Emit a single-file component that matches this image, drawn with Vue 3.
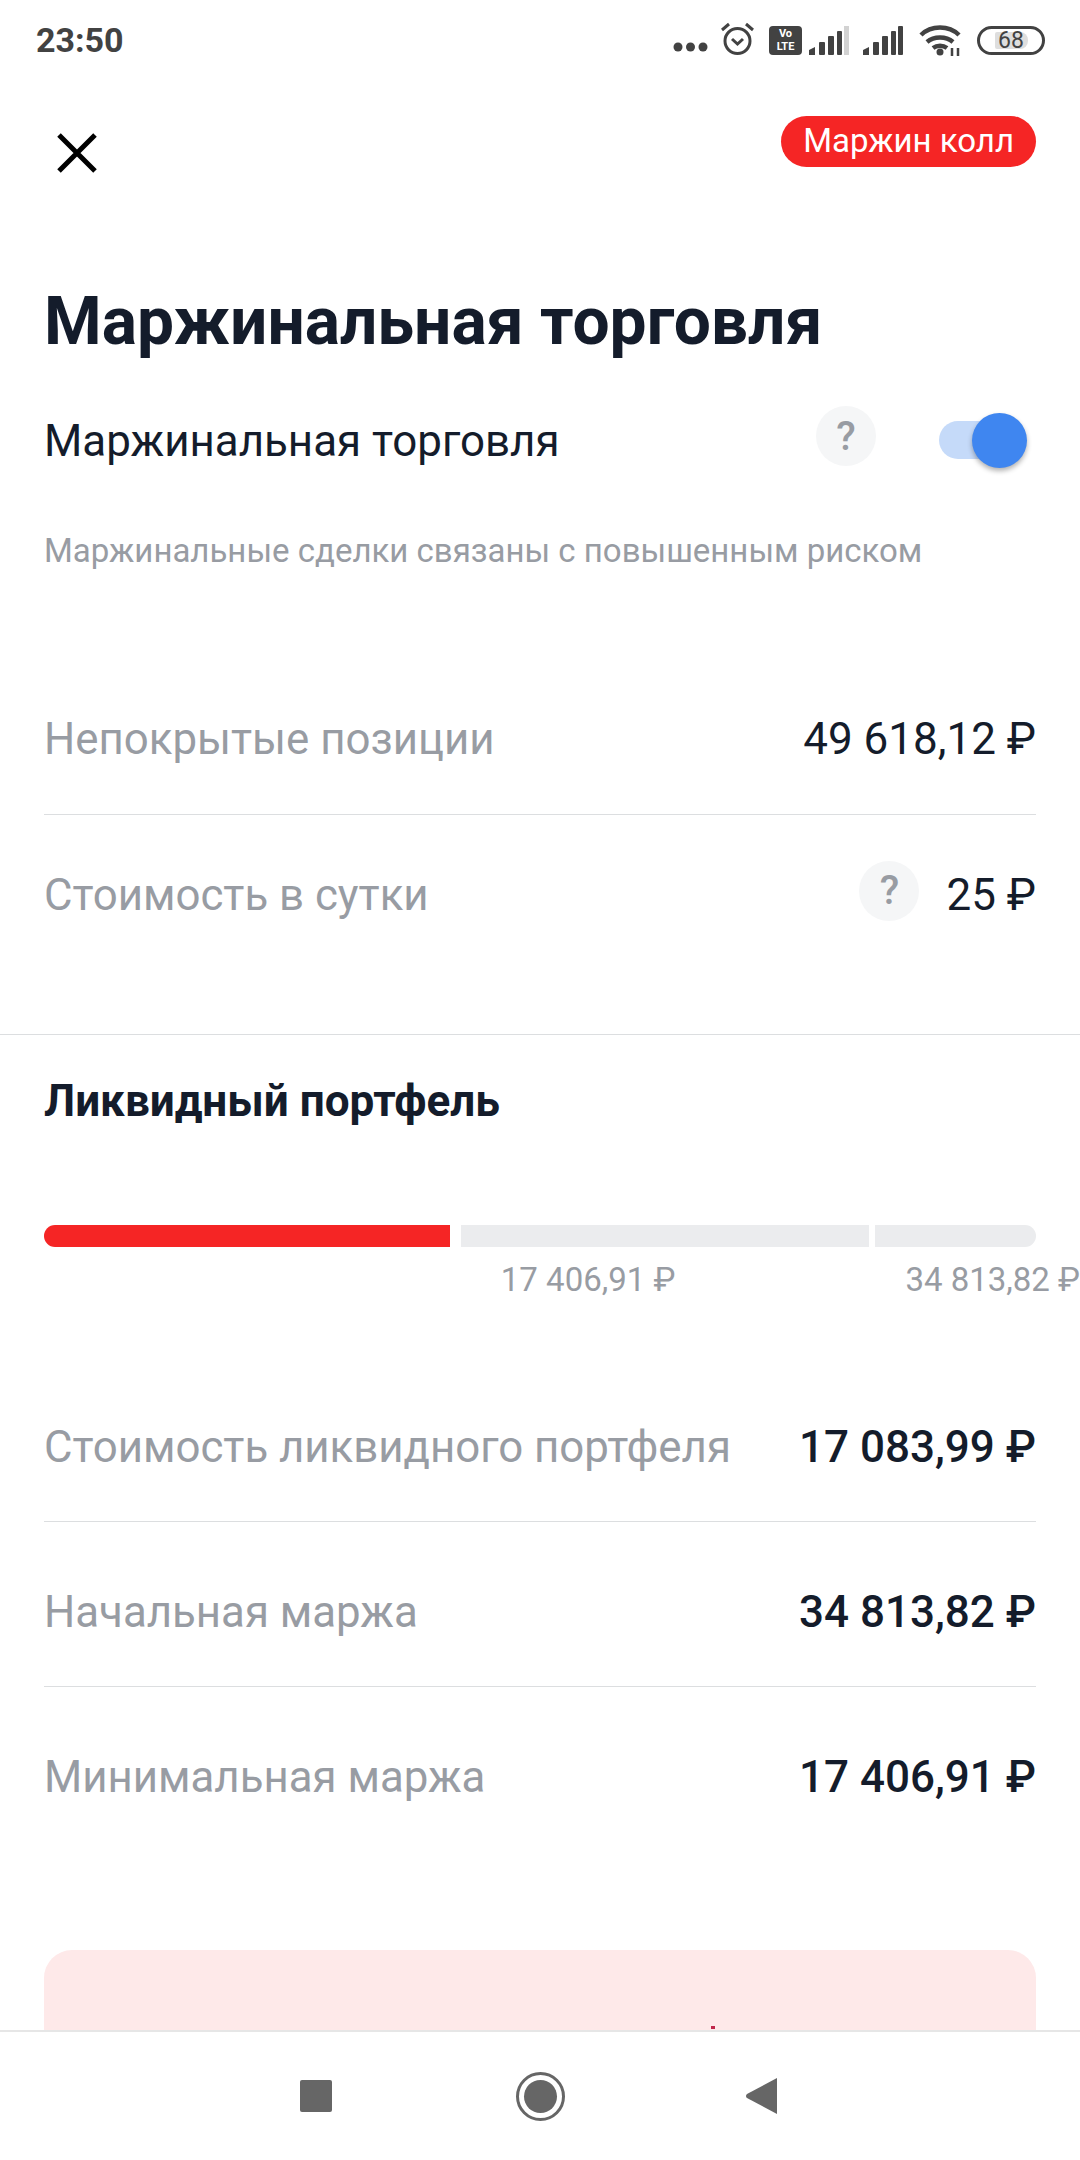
<template>
  <div class="screen">
    <div class="status-bar">
      <span class="time">23:50</span>
      <div class="status-icons">
        <svg class="dots" width="35" height="10" viewBox="0 0 35 10"><circle cx="5" cy="5" r="4.500" /><circle cx="17.500" cy="5" r="4.500" /><circle cx="30" cy="5" r="4.500" /></svg>
        <svg class="alarm" width="35" height="33" viewBox="0 0 35 33">
          <circle cx="17.500" cy="19" r="12.500" fill="none" stroke="#424242" stroke-width="3" />
          <path d="M12 17l5.500 5 5.500-5" fill="none" stroke="#424242" stroke-width="3" />
          <path d="M2 8l7-6M33 8l-7-6" fill="none" stroke="#424242" stroke-width="3" />
        </svg>
        <div class="volte"><span>Vo</span><span>LTE</span></div>
        <svg class="sig1" width="40" height="29" viewBox="0 0 40 29">
          <path d="M0 29v-5l6-3v8z" />
          <rect x="10" y="16" width="6" height="13" rx="1" />
          <rect x="19" y="10" width="6" height="19" rx="1" />
          <rect x="28" y="5" width="5" height="24" rx="1" />
          <rect x="35" y="0" width="5" height="29" fill="#d2d2d2" />
        </svg>
        <svg class="sig2" width="40" height="29" viewBox="0 0 40 29">
          <path d="M0 29v-5l6-3v8z" />
          <rect x="10" y="16" width="6" height="13" rx="1" />
          <rect x="19" y="10" width="6" height="19" rx="1" />
          <rect x="28" y="5" width="5" height="24" rx="1" />
          <rect x="35" y="0" width="5" height="29" rx="1" />
        </svg>
        <svg class="wifi" width="43" height="31" viewBox="0 0 43 31">
          <path d="M2 10C12 0 30 0 40 10M8 17c7-6 19-6 26 0M14 23c4-3 10-3 14 0" fill="none" stroke="#424242" stroke-width="4.500" />
          <circle cx="21" cy="27" r="3.500" />
          <path d="M33 23v8M39 23v8" stroke="#424242" stroke-width="2.500" />
        </svg>
        <div class="battery"><span class="battery-fill"></span><span class="battery-num">68</span></div>
      </div>
    </div>

    <main class="content">
      <div class="top-row">
        <svg class="close" width="42" height="42" viewBox="0 0 42 42">
          <path d="M3 3l36 36M39 3L3 39" stroke="#000" stroke-width="5" fill="none" />
        </svg>
        <span class="badge">Маржин колл</span>
      </div>

      <h1 class="title">Маржинальная торговля</h1>

      <div class="switch-row">
        <span class="switch-label">Маржинальная торговля</span>
        <span class="help help-switch">?</span>
        <div class="toggle"><span class="knob"></span></div>
      </div>

      <p class="note">Маржинальные сделки связаны с повышенным риском</p>

      <div class="rows rows-top">
        <div class="row">
          <span class="row-label">Непокрытые позиции</span>
          <span class="row-value">49 618,12 ₽</span>
        </div>
        <div class="row">
          <span class="row-label">Стоимость в сутки</span>
          <span class="help help-cost">?</span>
          <span class="row-value">25 ₽</span>
        </div>
      </div>

      <div class="full-divider"></div>

      <h2 class="section-title">Ликвидный портфель</h2>

      <div class="bar">
        <span class="seg seg-red"></span>
        <span class="seg seg-mid"></span>
        <span class="seg seg-end"></span>
      </div>
      <div class="bar-labels">
        <span class="bar-label first">17 406,91 ₽</span>
        <span class="bar-label">34 813,82 ₽</span>
      </div>

      <div class="rows rows-bottom">
        <div class="row" v-for="item in margins" :key="item.label">
          <span class="row-label">{{ item.label }}</span>
          <span class="row-value strong">{{ item.value }}</span>
        </div>
      </div>

      <div class="warning"><span class="warning-dot"></span></div>
    </main>

    <nav class="nav-bar">
      <span class="nav-square"></span>
      <span class="nav-home"><span></span></span>
      <svg width="32" height="36" viewBox="0 0 32 36"><path d="M32 0v36L2 20a2.500 2.500 0 0 1 0-4z" fill="#666" /></svg>
    </nav>
  </div>
</template>

<script setup>
const margins = [
  { label: 'Стоимость ликвидного портфеля', value: '17 083,99 ₽' },
  { label: 'Начальная маржа', value: '34 813,82 ₽' },
  { label: 'Минимальная маржа', value: '17 406,91 ₽' }
]
</script>

<style>
body {
  margin: 0;
  background: #fff;
}
</style>

<style scoped>
.screen {
  width: 1080px;
  height: 2160px;
  display: flex;
  flex-direction: column;
  overflow: hidden;
  background: #fff;
  font-family: Roboto, "Liberation Sans", sans-serif;
  color: #141c2b;
}

.status-bar {
  height: 80px;
  flex: none;
  display: flex;
  align-items: center;
  justify-content: space-between;
  padding: 0 35px 0 36px;
}

.time {
  font-size: 34px;
  font-weight: 700;
  color: #424242;
}

.status-icons {
  display: flex;
  align-items: center;
}

.status-icons svg {
  fill: #424242;
}

.dots {
  margin-top: 14px;
}

.alarm {
  margin: 0 0 3px 12px;
}

.volte {
  width: 33px;
  height: 29px;
  margin-left: 14px;
  background: #424242;
  border-radius: 4px;
  color: #fff;
  font-size: 11px;
  font-weight: 700;
  line-height: 13px;
  display: flex;
  flex-direction: column;
  align-items: center;
  justify-content: center;
}

.sig1 {
  margin-left: 7px;
}

.sig2 {
  margin-left: 14px;
}

.wifi {
  margin-left: 16px;
}

.battery {
  position: relative;
  width: 68px;
  height: 29px;
  box-sizing: border-box;
  border: 3px solid #424242;
  border-radius: 15px;
  margin-left: 15px;
  display: flex;
  align-items: center;
  justify-content: center;
}

.battery-fill {
  position: absolute;
  left: 15px;
  top: 3px;
  bottom: 3px;
  width: 33px;
  background: #dedede;
  border-radius: 2px 8px 8px 2px;
}

.battery-num {
  position: relative;
  font-size: 23px;
  color: #424242;
  line-height: 1;
}

.content {
  flex: 1;
  min-height: 0;
  overflow: hidden;
  padding: 36px 44px 0;
}

.top-row {
  display: flex;
  justify-content: space-between;
  align-items: flex-start;
}

.close {
  margin: 16px 0 0 12px;
}

.badge {
  height: 51px;
  line-height: 50px;
  padding: 0 22px;
  background: #f52525;
  color: #fff;
  border-radius: 26px;
  font-size: 33px;
}

.title {
  margin: 110px 0 0;
  font-size: 65.900px;
  line-height: 76px;
  font-weight: 700;
}

.switch-row {
  display: flex;
  align-items: center;
  margin-top: 37px;
  height: 88px;
}

.switch-label {
  font-size: 43.900px;
  flex: 1;
}

.help {
  width: 60px;
  height: 60px;
  border-radius: 50%;
  background: #f5f6f7;
  color: #989ca3;
  font-size: 40px;
  font-weight: 500;
  display: flex;
  align-items: center;
  justify-content: center;
  flex: none;
}

.help-switch {
  margin: 0 63px 10px 0;
}

.toggle {
  position: relative;
  width: 76px;
  height: 38px;
  border-radius: 19px;
  background: #c5daf9;
  margin: 0 21px 2px 0;
}

.knob {
  position: absolute;
  right: -12px;
  top: -8px;
  width: 55px;
  height: 55px;
  border-radius: 50%;
  background: #3f86f0;
  box-shadow: 0 3px 5px rgba(0, 0, 0, 0.3);
}

.note {
  margin: 46px 0 0;
  font-size: 33px;
  line-height: 40px;
  color: #989ca3;
}

.rows-top {
  margin-top: 88px;
}

.row {
  display: flex;
  align-items: center;
  box-sizing: border-box;
}

.rows-top .row {
  height: 155px;
  padding-top: 5px;
}

.row + .row {
  border-top: 1px solid #dcdee0;
}

.row-label {
  font-size: 43.800px;
  color: #989ca3;
  flex: 1;
}

.row-value {
  font-size: 44px;
}

.row-value.strong {
  font-weight: 500;
}

.help-cost {
  margin: 0 27px 8px 0;
}

.full-divider {
  height: 1px;
  background: #dcdee0;
  margin: 65px -44px 0;
}

.section-title {
  margin: 41px 0 0;
  font-size: 44.100px;
  line-height: 50px;
  font-weight: 700;
}

.bar {
  display: flex;
  height: 22px;
  margin-top: 99px;
}

.seg {
  display: block;
  background: #ebecee;
}

.seg-red {
  width: 406px;
  background: #f52525;
  border-radius: 11px 0 0 11px;
}

.seg-mid {
  width: 408px;
  margin-left: 11px;
}

.seg-end {
  flex: 1;
  margin-left: 6px;
  border-radius: 0 11px 11px 0;
}

.bar-labels {
  display: flex;
  justify-content: flex-end;
  margin: 14px -44px 0 0;
}

.bar-label {
  font-size: 33px;
  line-height: 38px;
  color: #989ca3;
}

.bar-label.first {
  margin-right: 230px;
}

.rows-bottom {
  margin-top: 57px;
}

.rows-bottom .row {
  height: 165px;
  padding-top: 16px;
}

.warning {
  height: 300px;
  margin-top: 99px;
  background: #fee9e9;
  border-radius: 28px 28px 0 0;
  position: relative;
}

.warning-dot {
  position: absolute;
  left: 667px;
  top: 76px;
  width: 4px;
  height: 3px;
  background: #c0264a;
}

.nav-bar {
  height: 130px;
  flex: none;
  box-sizing: border-box;
  border-top: 2px solid #e6e6e6;
  background: #fff;
  display: flex;
  align-items: center;
  justify-content: center;
  padding-right: 4px;
}

.nav-square {
  width: 32px;
  height: 32px;
  background: #666;
  border-radius: 2px;
  margin-right: 184px;
}

.nav-home {
  width: 49px;
  height: 49px;
  box-sizing: border-box;
  border: 3px solid #666;
  border-radius: 50%;
  display: flex;
  align-items: center;
  justify-content: center;
  margin-right: 180px;
}

.nav-home span {
  width: 33px;
  height: 33px;
  background: #666;
  border-radius: 50%;
}
</style>
